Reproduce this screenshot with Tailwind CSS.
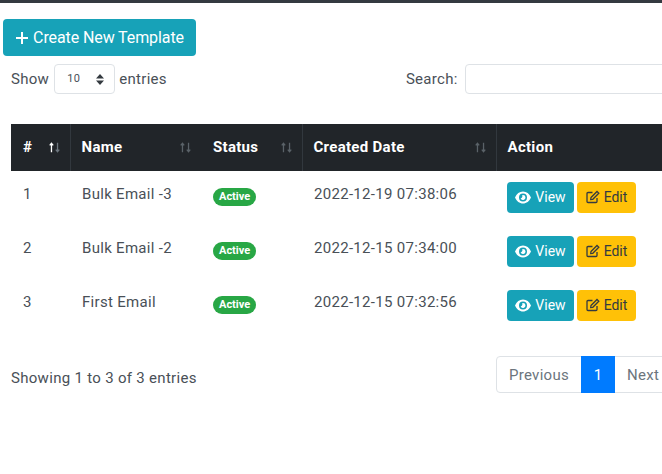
<!DOCTYPE html>
<html lang="en">
<head>
  <meta charset="UTF-8">
  <meta name="viewport" content="width=device-width, initial-scale=1.0">
  <title>Templates</title>
  <script src="https://cdn.jsdelivr.net/npm/@tailwindcss/browser@4"></script>
</head>
<body class="bg-white text-[#495057] font-['Roboto',sans-serif] text-[15px] tracking-[0.3px] h-[474px] overflow-hidden">
  <div class="h-[3px] bg-[#343a40]"></div>

  <div class="pl-[3px] pt-4">
    <button class="w-[193px] h-[37px] bg-[#17a2b8] text-white text-base tracking-[-0.1px] rounded flex items-center justify-center gap-1">
      <svg class="w-[14px] h-[14px]" viewBox="0 0 14 14" fill="none" stroke="white" stroke-width="2"><path d="M7 1v12M1 7h12"/></svg>
      Create New Template
    </button>
  </div>

  <div class="w-[720px] pl-[11px] mt-2 h-[30px] flex items-center">
    <span>Show</span>
    <div class="ml-[5px] w-[61px] h-[30px] border border-[#dee2e6] rounded flex items-center justify-between pl-3 pr-[10px] text-[11px]">
      10
      <svg class="w-2 h-[11px]" viewBox="0 0 8 11" fill="#343a40"><path d="M4 0l4 4.500H0zM4 11l4-4.500H0z"/></svg>
    </div>
    <span class="ml-1">entries</span>
    <span class="ml-[239px]">Search:</span>
    <div class="ml-[7px] w-[220px] h-[30px] border border-[#dee2e6] rounded"></div>
  </div>

  <table class="ml-[11px] mt-[30px] w-[680px] table-fixed border-collapse">
    <thead>
      <tr class="h-[47px] bg-[#212529] text-white text-left font-bold">
        <th class="w-[59px] pl-3 border-r border-[#32383e]">
          <div class="flex justify-between items-center pr-2">#
            <svg class="w-[15px] h-[13px]" viewBox="0 0 15 15" fill="none" stroke-width="1.500"><path stroke="white" d="M4 13V3M2 5l2-2.500L6 5"/><path stroke="#6c757d" d="M11 2v10M9 10l2 2.500 2-2.500"/></svg>
          </div>
        </th>
        <th class="w-[131px] pl-[11px]">
          <div class="flex justify-between items-center pr-2">Name
            <svg class="w-[15px] h-[13px]" viewBox="0 0 15 15" fill="none" stroke="#5a6268" stroke-width="1.500"><path d="M4 13V3M2 5l2-2.500L6 5M11 2v10M9 10l2 2.500 2-2.500"/></svg>
          </div>
        </th>
        <th class="w-[101px] pl-3 border-r border-[#32383e]">
          <div class="flex justify-between items-center pr-2">Status
            <svg class="w-[15px] h-[13px]" viewBox="0 0 15 15" fill="none" stroke="#5a6268" stroke-width="1.500"><path d="M4 13V3M2 5l2-2.500L6 5M11 2v10M9 10l2 2.500 2-2.500"/></svg>
          </div>
        </th>
        <th class="w-[194px] pl-[11px] border-r border-[#32383e]">
          <div class="flex justify-between items-center pr-2">Created Date
            <svg class="w-[15px] h-[13px]" viewBox="0 0 15 15" fill="none" stroke="#5a6268" stroke-width="1.500"><path d="M4 13V3M2 5l2-2.500L6 5M11 2v10M9 10l2 2.500 2-2.500"/></svg>
          </div>
        </th>
        <th class="pl-[11px]">
          <div class="flex justify-between items-center pr-[12px]">Action
            <svg class="w-[15px] h-[13px]" viewBox="0 0 15 15" fill="none" stroke="#5a6268" stroke-width="1.500"><path d="M4 13V3M2 5l2-2.500L6 5M11 2v10M9 10l2 2.500 2-2.500"/></svg>
          </div>
        </th>
      </tr>
    </thead>
    <tbody>
      <tr class="h-[54px]">
        <td class="pl-3 pb-[8px]">1</td>
        <td class="pl-3 pb-[8px]">Bulk Email -3</td>
        <td class="pl-3 pb-[5px]"><span class="inline-block bg-[#28a745] text-white text-[11px] tracking-normal font-bold leading-[18px] px-[6px] rounded-full">Active</span></td>
        <td class="pl-3 pb-[8px]">2022-12-19 07:38:06</td>
        <td class="pl-[11px] pb-[2px]">
          <div class="flex gap-[3px] tracking-normal">
            <a class="w-[67px] h-[31px] bg-[#17a2b8] text-white text-sm rounded flex items-center justify-center gap-1">
              <svg class="w-4 h-[13px]" viewBox="0 0 16 13" fill="white"><path fill-rule="evenodd" d="M8 .5c3.500 0 6.400 2.300 8 6-1.600 3.700-4.500 6-8 6s-6.400-2.300-8-6c1.600-3.700 4.500-6 8-6zm0 2a4 4 0 100 8 4 4 0 000-8zm0 1.500a2.500 2.500 0 11-2.400 3.200c1 .3 2.200-.8 1.700-3.100.2 0 .4-.1.700-.1z"/></svg>
              View
            </a>
            <a class="w-[59px] h-[31px] bg-[#ffc107] text-[#343a40] text-sm rounded flex items-center justify-center gap-1">
              <svg class="w-[14px] h-[14px]" viewBox="0 0 14 14" fill="none" stroke="#343a40" stroke-width="1.300"><path d="M11 8v3.500a1 1 0 01-1 1H2a1 1 0 01-1-1V3.500a1 1 0 011-1h4.500"/><path d="M5 7.500L11 1.500l1.800 1.800-6 6-2.100.3z"/></svg>
              Edit
            </a>
          </div>
        </td>
      </tr>
      <tr class="h-[54px]">
        <td class="pl-3 pb-[8px]">2</td>
        <td class="pl-3 pb-[8px]">Bulk Email -2</td>
        <td class="pl-3 pb-[5px]"><span class="inline-block bg-[#28a745] text-white text-[11px] tracking-normal font-bold leading-[18px] px-[6px] rounded-full">Active</span></td>
        <td class="pl-3 pb-[8px]">2022-12-15 07:34:00</td>
        <td class="pl-[11px] pb-[2px]">
          <div class="flex gap-[3px] tracking-normal">
            <a class="w-[67px] h-[31px] bg-[#17a2b8] text-white text-sm rounded flex items-center justify-center gap-1">
              <svg class="w-4 h-[13px]" viewBox="0 0 16 13" fill="white"><path fill-rule="evenodd" d="M8 .5c3.500 0 6.400 2.300 8 6-1.600 3.700-4.500 6-8 6s-6.400-2.300-8-6c1.600-3.700 4.500-6 8-6zm0 2a4 4 0 100 8 4 4 0 000-8zm0 1.500a2.500 2.500 0 11-2.400 3.200c1 .3 2.200-.8 1.700-3.100.2 0 .4-.1.700-.1z"/></svg>
              View
            </a>
            <a class="w-[59px] h-[31px] bg-[#ffc107] text-[#343a40] text-sm rounded flex items-center justify-center gap-1">
              <svg class="w-[14px] h-[14px]" viewBox="0 0 14 14" fill="none" stroke="#343a40" stroke-width="1.300"><path d="M11 8v3.500a1 1 0 01-1 1H2a1 1 0 01-1-1V3.500a1 1 0 011-1h4.500"/><path d="M5 7.500L11 1.500l1.800 1.800-6 6-2.100.3z"/></svg>
              Edit
            </a>
          </div>
        </td>
      </tr>
      <tr class="h-[54px]">
        <td class="pl-3 pb-[8px]">3</td>
        <td class="pl-3 pb-[7px]">First Email</td>
        <td class="pl-3 pb-[5px]"><span class="inline-block bg-[#28a745] text-white text-[11px] tracking-normal font-bold leading-[18px] px-[6px] rounded-full">Active</span></td>
        <td class="pl-3 pb-[8px]">2022-12-15 07:32:56</td>
        <td class="pl-[11px] pb-[2px]">
          <div class="flex gap-[3px] tracking-normal">
            <a class="w-[67px] h-[31px] bg-[#17a2b8] text-white text-sm rounded flex items-center justify-center gap-1">
              <svg class="w-4 h-[13px]" viewBox="0 0 16 13" fill="white"><path fill-rule="evenodd" d="M8 .5c3.500 0 6.400 2.300 8 6-1.600 3.700-4.500 6-8 6s-6.400-2.300-8-6c1.600-3.700 4.500-6 8-6zm0 2a4 4 0 100 8 4 4 0 000-8zm0 1.500a2.500 2.500 0 11-2.400 3.200c1 .3 2.200-.8 1.700-3.100.2 0 .4-.1.700-.1z"/></svg>
              View
            </a>
            <a class="w-[59px] h-[31px] bg-[#ffc107] text-[#343a40] text-sm rounded flex items-center justify-center gap-1">
              <svg class="w-[14px] h-[14px]" viewBox="0 0 14 14" fill="none" stroke="#343a40" stroke-width="1.300"><path d="M11 8v3.500a1 1 0 01-1 1H2a1 1 0 01-1-1V3.500a1 1 0 011-1h4.500"/><path d="M5 7.500L11 1.500l1.800 1.800-6 6-2.100.3z"/></svg>
              Edit
            </a>
          </div>
        </td>
      </tr>
    </tbody>
  </table>

  <div class="w-[720px] pl-[11px] mt-[23px] flex items-center">
    <span class="w-[485px] pt-[7px]">Showing 1 to 3 of 3 entries</span>
    <div class="flex h-[37px] border border-[#dee2e6] rounded text-[#6c757d] items-center">
      <span class="w-[84px] text-center pt-[2px]">Previous</span>
      <span class="w-[34px] h-[37px] bg-[#007bff] text-white flex items-center justify-center pt-[2px]">1</span>
      <span class="w-[56px] text-center pt-[2px]">Next</span>
    </div>
  </div>
</body>
</html>
